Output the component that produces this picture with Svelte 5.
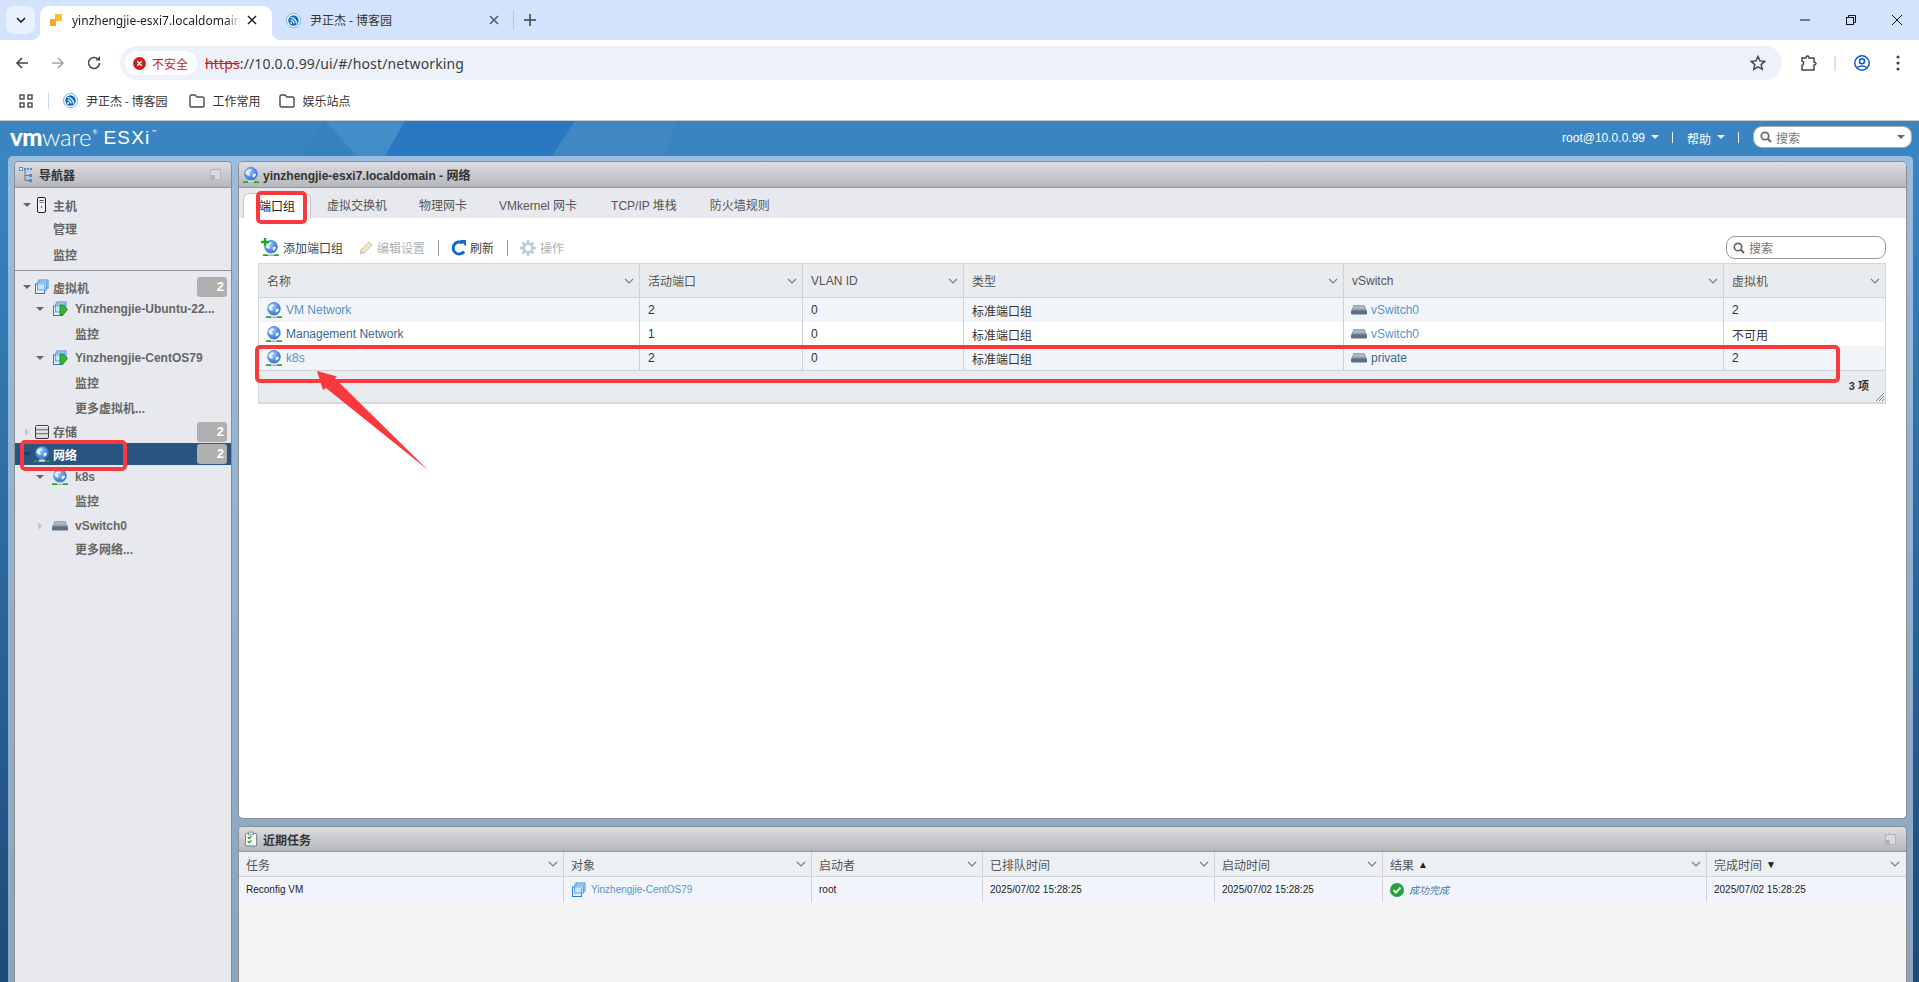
<script>
  const navRows = [
    { kind: 'top', h: 24, arrow: 'down', icon: 'server', label: '主机', depth: 0 },
    { h: 22, label: '管理', depth: 0 },
    { h: 31, label: '监控', depth: 0, divider: true },
    { kind: 'top', h: 22, arrow: 'down', icon: 'vms', label: '虚拟机', badge: 2, depth: 0, first: true },
    { h: 22, arrow: 'down', icon: 'vmon', label: 'Yinzhengjie-Ubuntu-22...', depth: 1 },
    { h: 26, label: '监控', depth: 1 },
    { h: 24, arrow: 'down', icon: 'vmon', label: 'Yinzhengjie-CentOS79', depth: 1 },
    { h: 24, label: '监控', depth: 1 },
    { h: 26, label: '更多虚拟机...', depth: 1 },
    { kind: 'top', h: 23, arrow: 'right', icon: 'storage', label: '存储', badge: 2, depth: 0 },
    { kind: 'top', h: 22, arrow: 'down', icon: 'globe', label: '网络', badge: 2, depth: 0, selected: true },
    { h: 24, arrow: 'down', icon: 'globe', label: 'k8s', depth: 1 },
    { h: 22, label: '监控', depth: 1 },
    { h: 30, arrow: 'right', icon: 'switch', label: 'vSwitch0', depth: 1 },
    { h: 14, label: '更多网络...', depth: 1 }
  ];
  const tabs = ['端口组', '虚拟交换机', '物理网卡', 'VMkernel 网卡', 'TCP/IP 堆栈', '防火墙规则'];
  const heads = ['名称', '活动端口', 'VLAN ID', '类型', 'vSwitch', '虚拟机'];
  const rows = [
    { name: 'VM Network', dark: false, ports: '2', vlan: '0', sw: 'vSwitch0', swDark: false, vms: '2' },
    { name: 'Management Network', dark: true, ports: '1', vlan: '0', sw: 'vSwitch0', swDark: false, vms: '不可用' },
    { name: 'k8s', dark: false, ports: '2', vlan: '0', sw: 'private', swDark: true, vms: '2' }
  ];
  const taskHeads = [
    { t: '任务' }, { t: '对象' }, { t: '启动者' }, { t: '已排队时间' },
    { t: '启动时间' }, { t: '结果', sort: '▲' }, { t: '完成时间', sort: '▼' }
  ];
  const stamp = '2025/07/02 15:28:25';
</script>

{#snippet chevron()}
  <svg class="chev" width="10" height="6" viewBox="0 0 10 6"><path d="M1 1l4 4 4-4" fill="none" stroke="#7a7f85" stroke-width="1.2"/></svg>
{/snippet}

{#snippet globe()}
  <svg class="ico" width="16" height="16" viewBox="0 0 16 16">
    <circle cx="8" cy="6.8" r="6.3" fill="url(#globeFill)" stroke="#3f7fd0" stroke-width=".8"/>
    <path d="M3.600 3.400c2-1.400 4-1.200 5-.3-.5 1.300-2.300 1.100-2.600 2.400-.3 1.100 1.300 1.700.7 3.100-1.400.2-4-1.100-4.300-2.700 0-1 .5-1.800 1.200-2.500zM10 7.200c1.100-.7 2.500-.4 3.100-.1-.2 1.600-1.200 3-2.700 3.600-.9-.9-1.200-2.500-.4-3.500z" fill="#eaf3fd"/>
    <rect x="6.800" y="12.600" width="2.400" height="1.200" fill="#8a97a5"/>
    <rect x="0" y="14.300" width="16" height="1.700" fill="#1fa81f"/>
    <rect x="5" y="13.600" width="6" height="2" fill="#d9dee3"/>
  </svg>
{/snippet}

{#snippet vmIcon(on)}
  <svg class="ico" width="16" height="16" viewBox="0 0 16 16">
    <rect x="5" y="1" width="9" height="8" fill="#cfe6fa" stroke="#3d8ee0"/>
    <rect x="1.500" y="5" width="9" height="9.500" fill="#e4f1fc" stroke="#2c7ad6"/>
    <rect x="3.500" y="3" width="9" height="8" fill="#b8dbf6" fill-opacity=".6" stroke="#5aa3e6"/>
    {#if on}
      <path d="M8 4h3l4.500 4.500L11 14H8z" fill="#35b335" stroke="#1a7d1a" stroke-width=".8"/>
    {/if}
  </svg>
{/snippet}

{#snippet switchIcon()}
  <svg class="ico" width="16" height="16" viewBox="0 0 16 16">
    <path d="M2.500 3h11L16 9H0z" fill="#8a9bb0"/>
    <path d="M3 3.500h10l1.500 3.500h-13z" fill="#a9b6c6"/>
    <rect x="0" y="8.500" width="16" height="4" rx="1" fill="#5e6f84"/>
  </svg>
{/snippet}

{#snippet serverIcon()}
  <svg class="ico" width="10" height="16" viewBox="0 0 10 16">
    <rect x=".5" y=".5" width="8" height="15" rx="1.500" fill="#eef0f2" stroke="#222"/>
    <rect x="2.500" y="3" width="4" height="1" fill="#444"/>
    <rect x="2.500" y="5" width="4" height="1" fill="#777"/>
    <circle cx="4.500" cy="10" r=".8" fill="#444"/>
  </svg>
{/snippet}

{#snippet storageIcon()}
  <svg class="ico" width="14" height="14" viewBox="0 0 14 14">
    <rect x=".5" y=".5" width="13" height="13" rx="1.500" fill="#d8dadd" stroke="#3b3b3b"/>
    <path d="M1 5h12M1 9h12" stroke="#3b3b3b"/>
    <path d="M1 1.500h12M1 6h12M1 10h12" stroke="#fff" stroke-opacity=".8"/>
  </svg>
{/snippet}

{#snippet maxIcon()}
  <svg class="maxi" width="11" height="11" viewBox="0 0 11 11">
    <rect x=".5" y=".5" width="10" height="10" fill="#d9dadc" stroke="#b3b5b8"/>
    <rect x="1" y="6" width="4" height="4" fill="#b3b5b8"/>
  </svg>
{/snippet}

{#snippet bfav()}
  <svg width="15" height="15" viewBox="0 0 15 15">
    <circle cx="7.500" cy="7.500" r="7" fill="#fff" stroke="#5cb8f0" stroke-width="1"/>
    <circle cx="7.500" cy="7.500" r="5.200" fill="#1268c3"/>
    <circle cx="5.200" cy="10" r="1" fill="#fff"/>
    <path d="M4.500 7a3.500 3.500 0 0 1 3.500 3.500M4.500 4.500a6 6 0 0 1 6 6" fill="none" stroke="#fff" stroke-width="1.200"/>
  </svg>
{/snippet}

{#snippet folder()}
  <svg width="16" height="14" viewBox="0 0 16 14"><path d="M1 2.500C1 1.700 1.500 1 2.500 1H6l2 2h5.500c.9 0 1.500.7 1.500 1.500v7c0 .8-.6 1.500-1.500 1.500h-11C1.500 13 1 12.300 1 11.500z" fill="none" stroke="#47494c" stroke-width="1.400"/></svg>
{/snippet}

<svg class="defs" width="0" height="0" aria-hidden="true">
  <defs>
    <radialGradient id="globeFill" cx=".35" cy=".3" r=".8">
      <stop offset="0" stop-color="#a9d0fa"/><stop offset="1" stop-color="#1c62d6"/>
    </radialGradient>
  </defs>
</svg>

<div class="page">
  <div class="tabstrip">
    <div class="tabmenu">
      <svg width="10" height="6" viewBox="0 0 10 6"><path d="M1 1l4 4 4-4" fill="none" stroke="#1f1f1f" stroke-width="1.600"/></svg>
    </div>
    <div class="btab active">
      <svg class="fav" width="12" height="12" viewBox="0 0 12 12">
        <rect x="5" y="0" width="7" height="7" fill="#fbc02d"/><rect x="0" y="5" width="6" height="7" fill="#f9a825"/>
      </svg>
      <span class="btab-title">yinzhengjie-esxi7.localdomain</span>
      <svg class="x" width="10" height="10" viewBox="0 0 10 10"><path d="M1 1l8 8M9 1l-8 8" stroke="#222" stroke-width="1.500"/></svg>
    </div>
    <div class="btab second">
      {@render bfav()}
      <span class="btab-title2">尹正杰 - 博客园</span>
      <svg class="x" width="10" height="10" viewBox="0 0 10 10"><path d="M1 1l8 8M9 1l-8 8" stroke="#55585c" stroke-width="1.500"/></svg>
    </div>
    <i class="tabsep"></i>
    <svg class="plus" width="12" height="12" viewBox="0 0 12 12"><path d="M6 0v12M0 6h12" stroke="#3c4043" stroke-width="1.500"/></svg>
    <div class="winctl">
      <svg width="12" height="12" viewBox="0 0 12 12"><path d="M1 6h10" stroke="#111" stroke-width="1"/></svg>
      <svg width="12" height="12" viewBox="0 0 12 12"><rect x="1.500" y="3.500" width="7" height="7" fill="none" stroke="#111"/><path d="M3.500 3.500v-2h7v7h-2" fill="none" stroke="#111"/></svg>
      <svg width="12" height="12" viewBox="0 0 12 12"><path d="M1 1l10 10M11 1L1 11" stroke="#111" stroke-width="1"/></svg>
    </div>
  </div>

  <div class="toolbar">
    <svg class="nav" width="16" height="16" viewBox="0 0 16 16"><path d="M14 8H3M8 3L3 8l5 5" fill="none" stroke="#474747" stroke-width="1.600"/></svg>
    <svg class="nav" width="16" height="16" viewBox="0 0 16 16"><path d="M2 8h11M8 3l5 5-5 5" fill="none" stroke="#a5a7aa" stroke-width="1.600"/></svg>
    <svg class="nav" width="16" height="16" viewBox="0 0 16 16"><path d="M13.500 8a5.500 5.500 0 1 1-1.600-3.900" fill="none" stroke="#474747" stroke-width="1.600"/><path d="M14 1v4.500H9.500z" fill="#474747"/></svg>
    <div class="omnibox">
      <div class="chip">
        <svg width="13" height="13" viewBox="0 0 13 13"><circle cx="6.500" cy="6.500" r="6.500" fill="#c5221f"/><path d="M4.300 4.300l4.400 4.400M8.700 4.300l-4.400 4.400" stroke="#fff" stroke-width="1.300"/></svg>
        <span>不安全</span>
      </div>
      <div class="url"><s>https</s>://10.0.0.99/ui/#/host/networking</div>
      <svg class="star" width="16" height="16" viewBox="0 0 16 16"><path d="M8 1.500l2 4.400 4.800.5-3.600 3.200 1 4.700L8 11.900l-4.200 2.400 1-4.700L1.200 6.400 6 5.900z" fill="none" stroke="#474747" stroke-width="1.500"/></svg>
    </div>
    <svg class="ext" width="17" height="17" viewBox="0 0 17 17"><path d="M2 4h4a2 2 0 0 1 1-2h1a2 2 0 0 1 1 2h5v4a2 2 0 0 1 2 1.500A2 2 0 0 1 14 11v5H2v-4.500a2 2 0 0 0 1.500-2A2 2 0 0 0 2 7z" transform="translate(0 -1)" fill="none" stroke="#474747" stroke-width="1.500"/></svg>
    <i class="tbsep"></i>
    <svg class="prof" width="16" height="16" viewBox="0 0 16 16"><circle cx="8" cy="8" r="7.200" fill="none" stroke="#0b57d0" stroke-width="1.500"/><circle cx="8" cy="6.300" r="2.500" fill="none" stroke="#0b57d0" stroke-width="1.500"/><path d="M3.500 12.500c2.500-2 6.500-2 9 0" fill="none" stroke="#0b57d0" stroke-width="1.500"/></svg>
    <svg class="dots" width="4" height="16" viewBox="0 0 4 16"><circle cx="2" cy="2" r="1.600" fill="#474747"/><circle cx="2" cy="8" r="1.600" fill="#474747"/><circle cx="2" cy="14" r="1.600" fill="#474747"/></svg>
  </div>

  <div class="bookmarks">
    <svg class="apps" width="14" height="14" viewBox="0 0 14 14" fill="none" stroke="#474747" stroke-width="1.400"><rect x="1" y="1" width="4" height="4"/><rect x="9" y="1" width="4" height="4"/><rect x="1" y="9" width="4" height="4"/><rect x="9" y="9" width="4" height="4"/></svg>
    <i class="bmsep"></i>
    <div class="bm first">{@render bfav()}<span>尹正杰 - 博客园</span></div>
    <div class="bm">{@render folder()}<span>工作常用</span></div>
    <div class="bm">{@render folder()}<span>娱乐站点</span></div>
  </div>

  <header class="esx">
    <svg class="facets" width="1919" height="35" viewBox="0 0 1919 35" aria-hidden="true">
      <path d="M325 0h80l-20 35h-28z" fill="#4a96cf" fill-opacity=".55"/>
      <path d="M300 35l25-35 32 35z" fill="#2f7fbe" fill-opacity=".5"/>
      <path d="M405 0h170l-23 35H385z" fill="#2b78c2"/>
      <path d="M575 0h100l-10 35H552z" fill="#4088c1"/>
    </svg>
    <div class="logo"><b>vm</b><span class="ware">ware</span><sup>®</sup><span class="esxi">ESXi</span><sup class="tm">™</sup></div>
    <div class="esx-right">
      <span class="user">root@10.0.0.99</span><i class="caret"></i><i class="hsep"></i>
      <span class="help">帮助</span><i class="caret"></i><i class="hsep"></i>
      <div class="topsearch">
        <svg width="12" height="12" viewBox="0 0 12 12"><circle cx="5" cy="5" r="3.700" fill="none" stroke="#666" stroke-width="1.700"/><path d="M7.800 7.800L11 11" stroke="#666" stroke-width="2"/></svg>
        <span>搜索</span>
        <i class="caret dark"></i>
      </div>
    </div>
  </header>

  <div class="workspace">
    <div class="inner">
      <aside class="panel navp">
        <div class="phead">
          <svg class="ico" width="16" height="16" viewBox="0 0 16 16" fill="none">
            <rect x=".5" y=".5" width="3" height="3" fill="#fff" stroke="#3d8ee0"/>
            <g fill="#3d8ee0"><rect x="5" y="1" width="2" height="2"/><rect x="8" y="1" width="2" height="2"/><rect x="11" y="1" width="2" height="2"/><rect x="10" y="7" width="3" height="3"/><rect x="10" y="12" width="3" height="3"/></g>
            <path d="M6 3v10.500h4M6 8.500h4" stroke="#6b7580"/>
          </svg>
          <span>导航器</span>
          {@render maxIcon()}
        </div>
        <div class="tree">
          {#each navRows as r}
            <div class="node" class:sel={r.selected} class:deep={r.depth === 1} class:sect={r.first} class:div={r.divider} style:height="{r.h}px">
              <span class="arr">
                {#if r.arrow === 'down'}<i class="tri-d"></i>{:else if r.arrow === 'right'}<i class="tri-r"></i>{/if}
              </span>
              <span class="nico">
                {#if r.icon === 'server'}{@render serverIcon()}
                {:else if r.icon === 'vms'}{@render vmIcon(false)}
                {:else if r.icon === 'vmon'}{@render vmIcon(true)}
                {:else if r.icon === 'storage'}{@render storageIcon()}
                {:else if r.icon === 'globe'}{@render globe()}
                {:else if r.icon === 'switch'}{@render switchIcon()}{/if}
              </span>
              <span class="nlabel">{r.label}</span>
              {#if r.badge}<span class="badge">{r.badge}</span>{/if}
            </div>
          {/each}
        </div>
      </aside>

      <div class="rightcol">
        <section class="panel mainp">
          <div class="phead">
            {@render globe()}
            <span>yinzhengjie-esxi7.localdomain - 网络</span>
          </div>
          <div class="tabs">
            {#each tabs as t, i}
              <div class="tab" class:on={i === 0}>{t}</div>
            {/each}
          </div>
          <div class="content">
            <div class="actions">
              <div class="act">
                <span class="plusglobe">{@render globe()}<svg class="pg" width="8" height="8" viewBox="0 0 8 8"><path d="M4 0v8M0 4h8" stroke="#1fa81f" stroke-width="2.400"/></svg></span>
                添加端口组
              </div>
              <div class="act off edit">
                <svg class="ico" width="16" height="16" viewBox="0 0 16 16"><path d="M2 14l1-4 8-8 3 3-8 8z" fill="#f3e5c0" stroke="#c9c3b0"/><path d="M2 14l1-4 3 3z" fill="#d6d1c0"/></svg>
                编辑设置
              </div>
              <i class="asep"></i>
              <div class="act tight">
                <svg class="ico" width="16" height="16" viewBox="0 0 16 16"><path d="M13 11.500A6 6 0 1 1 11.500 3" fill="none" stroke="#1266d0" stroke-width="3"/><path d="M9 0h6v6.500z" fill="#1266d0"/></svg>
                刷新
              </div>
              <i class="asep"></i>
              <div class="act off">
                <svg class="ico" width="16" height="16" viewBox="0 0 16 16"><circle cx="8" cy="8" r="4.500" fill="none" stroke="#bccde0" stroke-width="3"/><path d="M8 0v3M8 13v3M0 8h3M13 8h3M2.300 2.300l2.100 2.100M11.600 11.600l2.100 2.100M2.300 13.700l2.100-2.100M11.600 4.400l2.100-2.100" stroke="#bccde0" stroke-width="2.400"/></svg>
                操作
              </div>
              <div class="search">
                <svg width="12" height="12" viewBox="0 0 12 12"><circle cx="5" cy="5" r="3.700" fill="none" stroke="#666" stroke-width="1.700"/><path d="M7.800 7.800L11 11" stroke="#666" stroke-width="2"/></svg>
                <span>搜索</span>
              </div>
            </div>

            <div class="grid">
              <div class="gr ghead">
                {#each heads as h}
                  <div class="gc">{h}{@render chevron()}</div>
                {/each}
              </div>
              {#each rows as r, i}
                <div class="gr grow" class:odd={i % 2 === 0}>
                  <div class="gc namec">{@render globe()}<span class="link" class:dark={r.dark}>{r.name}</span></div>
                  <div class="gc">{r.ports}</div>
                  <div class="gc">{r.vlan}</div>
                  <div class="gc">标准端口组</div>
                  <div class="gc namec">{@render switchIcon()}<span class="link sw" class:dark={r.swDark}>{r.sw}</span></div>
                  <div class="gc">{r.vms}</div>
                </div>
              {/each}
              <div class="gfoot">
                <span>3 项</span>
                <svg class="grip" width="8" height="8" viewBox="0 0 8 8"><path d="M8 0L0 8M8 3L3 8M8 6L6 8" stroke="#666" stroke-width=".8"/></svg>
              </div>
            </div>
          </div>
        </section>

        <section class="panel tasks">
          <div class="phead th">
            <svg class="ico" width="13" height="16" viewBox="0 0 14 16">
              <rect x=".5" y="2" width="12" height="13.500" rx="1" fill="#f4f8f6" stroke="#66788a"/>
              <rect x="4" y="0.500" width="5" height="3" fill="#cfe4ef" stroke="#66788a" stroke-width=".7"/>
              <path d="M3 6l1.500 1.500L7 5M3 10.500L4.500 12 7 9.500" fill="none" stroke="#22a52a" stroke-width="1.400"/>
            </svg>
            <span>近期任务</span>
            {@render maxIcon()}
          </div>
          <div class="tbody">
            <div class="tr thead">
              {#each taskHeads as h}
                <div class="tc">{h.t}{#if h.sort}<em>{h.sort}</em>{/if}{@render chevron()}</div>
              {/each}
            </div>
            <div class="tr trow">
              <div class="tc">Reconfig VM</div>
              <div class="tc obj">{@render vmIcon(false)}<span>Yinzhengjie-CentOS79</span></div>
              <div class="tc">root</div>
              <div class="tc">{stamp}</div>
              <div class="tc">{stamp}</div>
              <div class="tc okc">
                <svg width="14" height="14" viewBox="0 0 14 14"><circle cx="7" cy="7" r="7" fill="#27a23a"/><path d="M3.500 7.200l2.500 2.500 4.500-5" fill="none" stroke="#fff" stroke-width="1.900"/></svg>
                <span>成功完成</span>
              </div>
              <div class="tc">{stamp}</div>
            </div>
          </div>
        </section>
      </div>
    </div>
  </div>

  <svg class="marks" width="1919" height="982" viewBox="0 0 1919 982" aria-hidden="true">
    <g fill="none" stroke="#f8393d" stroke-width="4">
      <rect x="22" y="442" width="103" height="27" rx="3"/>
      <rect x="258" y="193" width="47" height="29" rx="3"/>
      <rect x="257" y="347" width="1581" height="34" rx="3"/>
    </g>
    <path d="M317 371L337 376.500 335 378.500 428 470 326 388 323 390z" fill="#f8393d"/>
  </svg>
</div>

<style>
  :global(body) { margin: 0; background: #fff; }
  .defs { position: absolute; }
  .page {
    position: relative;
    width: 1919px;
    height: 982px;
    overflow: hidden;
    display: flex;
    flex-direction: column;
    font-family: "Liberation Sans", "Noto Sans CJK SC", sans-serif;
    font-size: 12px;
  }
  .ico, svg { flex: none; display: block; }

  /* browser chrome */
  .tabstrip { height: 40px; background: #d3e3fd; display: flex; align-items: flex-start; }
  .tabmenu { width: 29px; height: 28px; margin: 6px 0 0 6px; border-radius: 8px; background: #e8f0fe; display: flex; align-items: center; justify-content: center; }
  .btab { height: 34px; box-sizing: border-box; padding-bottom: 6px; margin-top: 6px; display: flex; align-items: center; font-family: "Noto Sans", "Noto Sans CJK SC", sans-serif; font-size: 12px; color: #1f1f1f; position: relative; }
  .btab.active { width: 232px; margin-left: 5px; background: #fff; border-radius: 9px 9px 0 0; }
  .btab.active::before, .btab.active::after { content: ""; position: absolute; bottom: 0; width: 9px; height: 9px; }
  .btab.active::before { left: -9px; background: radial-gradient(circle at 0 0, #d3e3fd 9px, #fff 9.500px); }
  .btab.active::after { right: -9px; background: radial-gradient(circle at 100% 0, #d3e3fd 9px, #fff 9.500px); }
  .fav { margin-left: 10px; }
  .btab-title { width: 168px; margin-left: 10px; white-space: nowrap; overflow: hidden; -webkit-mask-image: linear-gradient(to right, #000 92%, transparent); mask-image: linear-gradient(to right, #000 92%, transparent); }
  .btab .x { margin-left: 7px; }
  .btab.second { width: 228px; padding-left: 14px; }
  .btab-title2 { margin-left: 9px; width: 179px; color: #333; }
  .btab.second .x { margin-left: 0; }
  .tabsep { width: 1px; height: 20px; margin: 10px 0 0 13px; background: #a8c7fa; }
  .plus { margin: 14px 0 0 10px; }
  .winctl { margin-left: auto; margin-top: 14px; display: flex; gap: 34px; padding-right: 16px; }

  .toolbar { height: 41px; box-sizing: border-box; padding-top: 5px; background: #fff; border-radius: 9px 9px 0 0; display: flex; align-items: center; position: relative; }
  .nav { margin-left: 20px; }
  .nav:first-child { margin-left: 14px; }
  .omnibox { width: 1662px; height: 34px; margin-left: 18px; background: #edf2fa; border-radius: 17px; display: flex; align-items: center; box-sizing: border-box; padding: 0 16px 0 5px; }
  .chip { width: 72px; height: 24px; background: #fff; border-radius: 12px; display: flex; align-items: center; gap: 6px; box-sizing: border-box; padding-left: 8px; color: #c5221f; font-size: 12px; font-family: "Noto Sans CJK SC", sans-serif; }
  .url { margin-left: 8px; font-family: "Noto Sans", "Liberation Sans", sans-serif; font-size: 14px; color: #3a3d40; letter-spacing: .01em; }
  .url s { color: #c5221f; }
  .star { margin-left: auto; }
  .ext { margin-left: 18px; }
  .tbsep { width: 2px; height: 15px; margin-left: 17px; background: #d3e3fd; }
  .prof { margin-left: 18px; }
  .dots { margin-left: 26px; }

  .bookmarks { height: 39px; box-sizing: border-box; background: #fff; display: flex; align-items: center; color: #333; font-family: "Noto Sans CJK SC", sans-serif; font-size: 12px; }
  .apps { margin-left: 19px; }
  .bmsep { width: 1px; height: 16px; margin-left: 15px; background: #c9d8ee; }
  .bm { display: flex; align-items: center; gap: 8px; margin-left: 18px; }
  .bm.first { margin-left: 14px; }
  .bm.first span { padding-right: 3px; }

  /* ESXi header */
  .esx { height: 36px; box-sizing: border-box; border-top: 1px solid #c9c9c9; background: #3a84c1; position: relative; display: flex; align-items: center; color: #fff; flex: none; }
  .facets { position: absolute; left: 0; top: 0; }
  .logo { position: relative; margin-left: 10px; display: flex; align-items: center; font-family: Lato, "Liberation Sans", sans-serif; font-size: 24px; line-height: 1; margin-top: -3px; }
  .logo b { font-weight: 900; letter-spacing: -.5px; }
  .ware { font-weight: 300; letter-spacing: -.2px; }
  .logo sup { font-size: 6px; align-self: flex-start; margin: 4px 0 0 1px; }
  .esxi { margin-left: 6px; font-family: "Liberation Sans", sans-serif; font-size: 19px; letter-spacing: 1.200px; }
  .esx-right { position: relative; margin-left: auto; display: flex; align-items: center; margin-top: -3px; padding-right: 7px; font-size: 12px; }
  .user, .help { position: relative; top: 1px; }
  .caret { width: 0; height: 0; border: 4px solid transparent; border-top: 4px solid #e8f1f9; border-bottom: 0; margin-left: 6px; }
  .caret.dark { border-top-color: #666; margin-left: auto; margin-right: 6px; }
  .hsep { width: 1px; height: 11px; background: #e8f1f9; margin: 0 14px 0 13px; }
  .topsearch { width: 159px; height: 22px; box-sizing: border-box; background: #fff; border: 1px solid #aaa; border-radius: 9px; display: flex; align-items: center; padding-left: 6px; gap: 4px; color: #777; }

  /* workspace */
  .workspace { flex: 1; min-height: 0; padding-left: 8px; padding-right: 6px; background: linear-gradient(#3a85c2, #1d4b78); display: flex; }
  .inner { flex: 1; min-width: 0; display: flex; gap: 6px; box-sizing: border-box; padding: 5px 6px 0 6px; border-radius: 5px 5px 0 0; background: linear-gradient(#9abddf, #8ba5bf); }
  .panel { box-sizing: border-box; border: 1px solid #8a8c90; border-bottom: 0; border-radius: 5px 5px 0 0; display: flex; flex-direction: column; overflow: hidden; }
  .phead { height: 26px; flex: none; box-sizing: border-box; border-bottom: 1px solid #96989c; background: linear-gradient(#dcdde0, #b6b7ba); display: flex; align-items: center; font-weight: bold; color: #333; padding-left: 4px; gap: 4px; }
  .maxi { margin-left: auto; margin-right: 10px; }

  .navp { width: 218px; flex: none; background: #e8e9ee; }
  .tree { padding-top: 5px; }
  .node { display: flex; align-items: center; color: #666; font-weight: bold; position: relative; }
  .node.div::after { content: ""; position: absolute; left: 0; right: 0; bottom: -1px; height: 1px; background: #8f9195; }
  .node.sect { margin-top: 6px; }
  .arr { width: 8px; margin-left: 8px; display: flex; justify-content: center; }
  .tri-d { width: 0; height: 0; border: 4px solid transparent; border-top: 4px solid #666; border-bottom: 0; }
  .tri-r { width: 0; height: 0; border: 4px solid transparent; border-left: 4px solid #c4c5c9; border-right: 0; }
  .nico { width: 16px; margin-left: 3px; display: flex; justify-content: center; }
  .nlabel { margin-left: 3px; white-space: nowrap; }
  .node.deep .arr { margin-left: 21px; }
  .node.deep .nico { margin-left: 8px; }
  .node.deep .nlabel { margin-left: 7px; }
  .node.sel { background: #2b5481; color: #fff; }
  .node.sel .tri-d { border-top-color: #1f3f63; }
  .badge { position: absolute; right: 4px; top: 50%; transform: translateY(-50%); width: 30px; height: 20px; box-sizing: border-box; padding-right: 3px; border-radius: 3px; background: #b0b0b0; color: #fff; text-align: right; line-height: 20px; font-size: 13px; }

  .rightcol { flex: 1; min-width: 0; display: flex; flex-direction: column; gap: 7px; }
  .mainp { height: 658px; flex: none; background: #fff; border-radius: 5px; border-bottom: 1px solid #8a8c90; }
  .tabs { height: 30px; flex: none; background: #e8e9ee; display: flex; align-items: flex-end; padding-left: 4px; }
  .tab { height: 25px; box-sizing: border-box; padding: 0 16px; line-height: 26px; color: #555; white-space: nowrap; }
  .tab:nth-child(5) { margin-left: 2px; }
  .tab:nth-child(6) { margin-left: 1px; }
  .tab.on { width: 68px; padding: 0; text-align: center; background: #fff; border: 1px solid #c4c5ca; border-bottom: 0; border-radius: 6px 6px 0 0; color: #222; }
  .content { flex: 1; padding: 0 20px 0 19px; }
  .actions { height: 45px; box-sizing: border-box; padding: 14px 0 0 5px; display: flex; align-items: center; color: #444; }
  .act { display: flex; align-items: center; gap: 4px; white-space: nowrap; }
  .act.off { color: #aeb0b3; }
  .act.edit { margin-left: 15px; gap: 3px; }
  .act.tight { gap: 3px; }
  .plusglobe { position: relative; display: block; }
  .pg { position: absolute; left: -2px; top: -2px; }
  .asep { width: 1px; height: 16px; background: #999; margin: 0 12px 0 13px; }
  .search { margin-left: auto; width: 160px; height: 23px; box-sizing: border-box; border: 1px solid #999; border-radius: 9px; display: flex; align-items: center; gap: 4px; padding-left: 6px; color: #777; }

  .grid { border: 1px solid #d5d7da; border-bottom-width: 2px; width: 1628px; box-sizing: border-box; color: #333; }
  .gr { display: grid; grid-template-columns: 380px 163px 161px 380px 380px 162px; }
  .ghead { height: 33px; background: #e9ecef; border-bottom: 1px solid #d0d2d5; color: #555; box-sizing: content-box; }
  .gc { display: flex; align-items: center; box-sizing: border-box; padding-left: 8px; border-left: 1px solid #d0d2d5; position: relative; white-space: nowrap; }
  .gc:first-child { border-left: 0; }
  .chev { position: absolute; right: 5px; top: 50%; margin-top: -3px; }
  .grow { height: 24px; background: #fff; }
  .grow.odd { background: #f1f4f9; }
  .namec { gap: 4px; padding-left: 7px; }
  .link { color: #5595c9; }
  .link.dark { color: #39688f; }
  .gfoot { height: 32px; background: #e9ecef; border-top: 1px solid #d0d2d5; position: relative; text-align: right; line-height: 30px; font-weight: bold; font-size: 11px; padding-right: 16px; box-sizing: border-box; }
  .grip { position: absolute; right: 1px; bottom: 1px; }

  .tasks { flex: 1; min-height: 0; background: #f4f4f4; }
  .th { height: 25px; gap: 4px; padding-left: 6px; }
  .th span { margin-left: 1px; }
  .tr { display: grid; grid-template-columns: 324px 248px 171px 232px 168px 324px 199px; }
  .thead { height: 25px; background: #ecf0f3; border-bottom: 1px solid #d0d2d5; box-sizing: border-box; color: #555; }
  .trow { height: 25px; background: #f1f5fb; font-size: 10px; color: #222; }
  .tc { position: relative; display: flex; align-items: center; padding-left: 7px; border-left: 1px solid #d0d2d5; white-space: nowrap; }
  .tc:first-child { border-left: 0; }
  .tc em { font-style: normal; font-size: 10px; color: #222; margin-left: 4px; }
  .obj { gap: 4px; }
  .obj span { color: #5595c9; }
  .okc { gap: 5px; }
  .okc span { color: #4878a8; font-style: italic; }

  .marks { position: absolute; left: 0; top: 0; pointer-events: none; }
</style>
